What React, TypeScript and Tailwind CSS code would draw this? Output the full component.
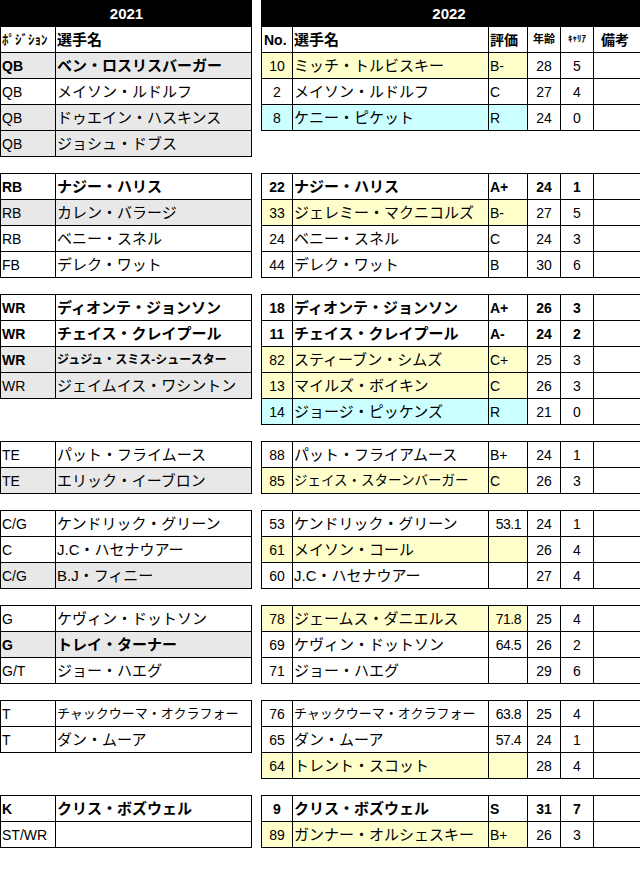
import React from "react";

type L = { pos: string; name: string; bold?: boolean; gray?: boolean; sz?: "s12" | "s13" };
type R = {
  no: string;
  name: string;
  grade: string;
  age: string;
  car: string;
  bold?: boolean;
  bg?: "y" | "c";
  num?: boolean;
  sz?: "s13" | "s135";
};
type Grp = { left: L[]; right: R[] };

const groups: Grp[] = [
  {
    left: [
      { pos: "QB", name: "ベン・ロスリスバーガー", bold: true, gray: true },
      { pos: "QB", name: "メイソン・ルドルフ" },
      { pos: "QB", name: "ドゥエイン・ハスキンス", gray: true },
      { pos: "QB", name: "ジョシュ・ドブス", gray: true },
    ],
    right: [
      { no: "10", name: "ミッチ・トルビスキー", grade: "B-", age: "28", car: "5", bg: "y" },
      { no: "2", name: "メイソン・ルドルフ", grade: "C", age: "27", car: "4" },
      { no: "8", name: "ケニー・ピケット", grade: "R", age: "24", car: "0", bg: "c" },
    ],
  },
  {
    left: [
      { pos: "RB", name: "ナジー・ハリス", bold: true },
      { pos: "RB", name: "カレン・バラージ", gray: true },
      { pos: "RB", name: "ベニー・スネル" },
      { pos: "FB", name: "デレク・ワット" },
    ],
    right: [
      { no: "22", name: "ナジー・ハリス", grade: "A+", age: "24", car: "1", bold: true },
      { no: "33", name: "ジェレミー・マクニコルズ", grade: "B-", age: "27", car: "5", bg: "y" },
      { no: "24", name: "ベニー・スネル", grade: "C", age: "24", car: "3" },
      { no: "44", name: "デレク・ワット", grade: "B", age: "30", car: "6" },
    ],
  },
  {
    left: [
      { pos: "WR", name: "ディオンテ・ジョンソン", bold: true },
      { pos: "WR", name: "チェイス・クレイプール", bold: true },
      { pos: "WR", name: "ジュジュ・スミス-シュースター", bold: true, gray: true, sz: "s12" },
      { pos: "WR", name: "ジェイムイス・ワシントン", gray: true },
    ],
    right: [
      { no: "18", name: "ディオンテ・ジョンソン", grade: "A+", age: "26", car: "3", bold: true },
      { no: "11", name: "チェイス・クレイプール", grade: "A-", age: "24", car: "2", bold: true },
      { no: "82", name: "スティーブン・シムズ", grade: "C+", age: "25", car: "3", bg: "y" },
      { no: "13", name: "マイルズ・ボイキン", grade: "C", age: "26", car: "3", bg: "y" },
      { no: "14", name: "ジョージ・ピッケンズ", grade: "R", age: "21", car: "0", bg: "c" },
    ],
  },
  {
    left: [
      { pos: "TE", name: "パット・フライムース" },
      { pos: "TE", name: "エリック・イーブロン", gray: true },
    ],
    right: [
      { no: "88", name: "パット・フライアムース", grade: "B+", age: "24", car: "1" },
      { no: "85", name: "ジェイス・スターンバーガー", grade: "C", age: "26", car: "3", bg: "y", sz: "s135" },
    ],
  },
  {
    left: [
      { pos: "C/G", name: "ケンドリック・グリーン" },
      { pos: "C", name: "J.C・ハセナウアー" },
      { pos: "C/G", name: "B.J・フィニー", gray: true },
    ],
    right: [
      { no: "53", name: "ケンドリック・グリーン", grade: "53.1", age: "24", car: "1", num: true },
      { no: "61", name: "メイソン・コール", grade: "", age: "26", car: "4", bg: "y" },
      { no: "60", name: "J.C・ハセナウアー", grade: "", age: "27", car: "4" },
    ],
  },
  {
    left: [
      { pos: "G", name: "ケヴィン・ドットソン" },
      { pos: "G", name: "トレイ・ターナー", bold: true, gray: true },
      { pos: "G/T", name: "ジョー・ハエグ" },
    ],
    right: [
      { no: "78", name: "ジェームス・ダニエルス", grade: "71.8", age: "25", car: "4", bg: "y", num: true },
      { no: "69", name: "ケヴィン・ドットソン", grade: "64.5", age: "26", car: "2", num: true },
      { no: "71", name: "ジョー・ハエグ", grade: "", age: "29", car: "6" },
    ],
  },
  {
    left: [
      { pos: "T", name: "チャックウーマ・オクラフォー", sz: "s13" },
      { pos: "T", name: "ダン・ムーア" },
    ],
    right: [
      { no: "76", name: "チャックウーマ・オクラフォー", grade: "63.8", age: "25", car: "4", num: true, sz: "s13" },
      { no: "65", name: "ダン・ムーア", grade: "57.4", age: "24", car: "1", num: true },
      { no: "64", name: "トレント・スコット", grade: "", age: "28", car: "4", bg: "y" },
    ],
  },
  {
    left: [
      { pos: "K", name: "クリス・ボズウェル", bold: true },
      { pos: "ST/WR", name: "" },
    ],
    right: [
      { no: "9", name: "クリス・ボズウェル", grade: "S", age: "31", car: "7", bold: true },
      { no: "89", name: "ガンナー・オルシェスキー", grade: "B+", age: "26", car: "3", bg: "y" },
    ],
  },
];

const cell = "h-full border-r border-black flex items-center whitespace-nowrap overflow-hidden";

function LeftRow({ r }: { r: L }) {
  const bg = r.gray ? "bg-[#e8e8e8]" : "bg-white";
  const w = r.bold ? "font-bold" : "font-normal";
  const sz = r.sz === "s12" ? "text-[12px]" : r.sz === "s13" ? "text-[13px]" : "text-[15px]";
  return (
    <div className={`flex h-[26px] border-b border-black ${bg}`}>
      <div className={`${cell} w-[55px] pl-[1px] text-[14px] ${w}`}>{r.pos}</div>
      <div className={`${cell} w-[196px] pl-[1px] ${sz} ${w}`}>{r.name}</div>
    </div>
  );
}

function RightRow({ r }: { r: R }) {
  const bg = r.bg === "y" ? "bg-[#ffffcc]" : r.bg === "c" ? "bg-[#ccffff]" : "bg-white";
  const w = r.bold ? "font-bold" : "font-normal";
  const sz = r.sz === "s13" ? "text-[13px]" : r.sz === "s135" ? "text-[13.5px]" : "text-[15px]";
  const gr = r.num ? "justify-end pr-[6px] text-[14px] tracking-[-0.5px]" : "pl-[1px] text-[14px]";
  return (
    <div className="flex h-[26px] border-b border-black">
      <div className={`${cell} w-[31px] justify-center text-[14px] ${bg} ${w}`}>{r.no}</div>
      <div className={`${cell} w-[196px] pl-[1px] ${sz} ${bg} ${w}`}>{r.name}</div>
      <div className={`${cell} w-[39px] ${gr} ${bg} ${w}`}>{r.grade}</div>
      <div className={`${cell} w-[33px] justify-center text-[14px] ${w}`}>{r.age}</div>
      <div className={`${cell} w-[33px] justify-center text-[14px] ${w}`}>{r.car}</div>
      <div className={`${cell} w-[50px]`}></div>
    </div>
  );
}

export default function App() {
  return (
    <div className="w-[640px] h-[872px] overflow-hidden bg-white text-black font-['Liberation_Sans','Noto_Sans_CJK_JP',sans-serif] leading-none">
      <div className="flex flex-col gap-[16px]">
        {groups.map((g, gi) => (
          <div key={gi} className="flex items-start">
            <div className={`w-[252px] shrink-0 border-l border-black ${gi === 0 ? "" : "border-t"}`}>
              {gi === 0 && (
                <>
                  <div className="h-[27px] bg-black text-white font-bold text-[15px] flex items-center justify-center">
                    2021
                  </div>
                  <div className="flex h-[26px] border-b border-black">
                    <div className={`${cell} w-[55px] pl-[1px] text-[13px] font-bold`}>ﾎﾟｼﾞｼｮﾝ</div>
                    <div className={`${cell} w-[196px] pl-[1px] text-[15px] font-bold`}>選手名</div>
                  </div>
                </>
              )}
              {g.left.map((r, i) => (
                <LeftRow key={i} r={r} />
              ))}
            </div>
            <div className={`ml-[9px] w-[383px] shrink-0 border-l border-black ${gi === 0 ? "" : "border-t"}`}>
              {gi === 0 && (
                <>
                  <div className="h-[27px] bg-black text-white font-bold text-[15px] flex items-center justify-center pr-[8px]">
                    2022
                  </div>
                  <div className="flex h-[26px] border-b border-black font-bold">
                    <div className={`${cell} w-[31px] pl-[2px] text-[14px]`}>No.</div>
                    <div className={`${cell} w-[196px] pl-[1px] text-[15px]`}>選手名</div>
                    <div className={`${cell} w-[39px] pl-[1px] text-[14px]`}>評価</div>
                    <div className={`${cell} w-[33px] justify-center text-[11px]`}>年齢</div>
                    <div className={`${cell} w-[33px] justify-center text-[9px]`}>ｷｬﾘｱ</div>
                    <div className={`${cell} w-[50px] pl-[7px] text-[14px]`}>備考</div>
                  </div>
                </>
              )}
              {g.right.map((r, i) => (
                <RightRow key={i} r={r} />
              ))}
            </div>
          </div>
        ))}
      </div>
    </div>
  );
}
